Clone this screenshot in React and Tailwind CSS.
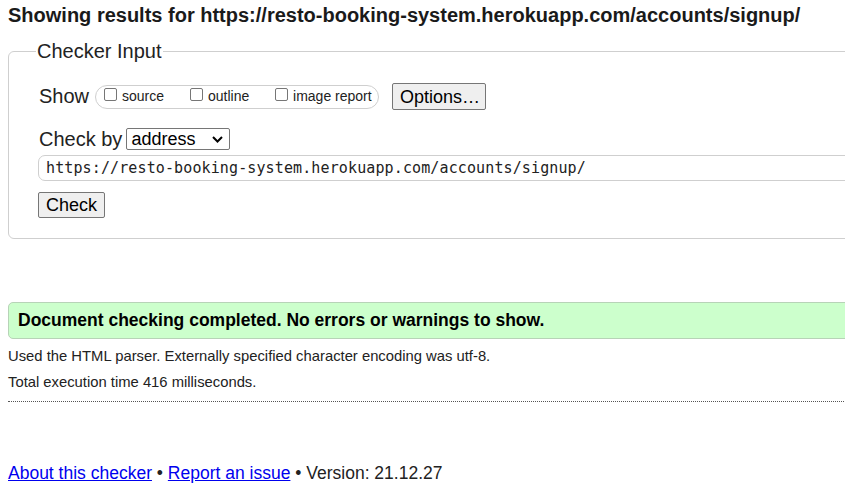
const Box = () => (
  <span className="inline-block w-[13px] h-[13px] border border-[#767676] rounded-[2px] bg-white mr-[5px] translate-y-[-2px]" />
);

const Btn = ({ children, className = "" }) => (
  <button
    className={`bg-[#efefef] border border-[#767676] rounded-[2px] text-black text-[18px] leading-[20px] ${className}`}
  >
    {children}
  </button>
);

const App = () => {
  return (
    <div className="w-[845px] h-[502px] overflow-hidden bg-white font-['Liberation_Sans',Arial,sans-serif] text-[#222]">
      <div className="w-[1000px] px-2">
        <h2 className="text-[20px] font-bold leading-[22px] pt-[4px] text-[#1a1a1a]">
          Showing results for https://resto-booking-system.herokuapp.com/accounts/signup/
        </h2>

        {/* Checker input */}
        <fieldset className="mt-[14px] border border-[#cfcfcf] rounded-[6px] pl-[30px] pt-[20px] pb-[20px]">
          <legend className="ml-[-3px] px-[1px] text-[20px] leading-[23px] text-[#222]">Checker Input</legend>

          <div className="flex items-center h-[27px]">
            <span className="text-[20px] leading-[23px] mr-[6px]">Show</span>
            <div className="flex items-center h-[24px] w-[284px] border border-[#cfcfcf] rounded-full pl-[8px] text-[14px] text-[#222]">
              <label className="flex items-center w-[86px]">
                <Box />
                source
              </label>
              <label className="flex items-center w-[85px]">
                <Box />
                outline
              </label>
              <label className="flex items-center">
                <Box />
                image report
              </label>
            </div>
            <Btn className="ml-[13px] h-[27px] w-[94px] pl-[2px]">Options…</Btn>
          </div>

          <div className="flex items-center mt-[18px] h-[22px]">
            <span className="text-[20px] leading-[23px] mr-[4px]">Check by</span>
            <div className="flex items-center justify-between h-[22px] w-[104px] border border-[#767676] rounded-[2px] pl-[4px] pr-[6px] text-[18px] text-black">
              address
              <svg width="11" height="7" viewBox="0 0 11 7" fill="none">
                <path d="M1 1l4.5 4.5L10 1" stroke="#000" strokeWidth="2" />
              </svg>
            </div>
          </div>

          <div className="mt-[5px] -ml-[1px] h-[26px] border border-[#cfcfcf] rounded-[7px] flex items-center pl-[7px] font-['DejaVu_Sans_Mono','Liberation_Mono',monospace] text-[15px] tracking-[0.12px] text-[#222]">
            https://resto-booking-system.herokuapp.com/accounts/signup/
          </div>

          <Btn className="mt-[11px] -ml-[1px] h-[26px] w-[67px] block">Check</Btn>
        </fieldset>

        {/* Result */}
        <div className="mt-[63px] h-[37px] bg-[#ccffcc] border border-[#b7d3b7] rounded-[5px] flex items-center pl-[9px] text-[17.5px] font-bold text-black">
          Document checking completed. No errors or warnings to show.
        </div>

        <p className="mt-[9px] text-[14.8px] leading-[17px] text-[#222]">
          Used the HTML parser. Externally specified character encoding was utf-8.
        </p>
        <p className="mt-[9px] text-[14.8px] leading-[17px] text-[#222]">
          Total execution time 416 milliseconds.
        </p>
        <hr className="mt-[10px] border-0 border-t border-dotted border-[#555]" />

        <p className="mt-[60px] text-[17.5px] leading-[22px] text-[#222]">
          <a className="text-[#0000ee] underline">About this checker</a> •{" "}
          <a className="text-[#0000ee] underline">Report an issue</a> • Version: 21.12.27
        </p>
      </div>
    </div>
  );
};

export default App;
